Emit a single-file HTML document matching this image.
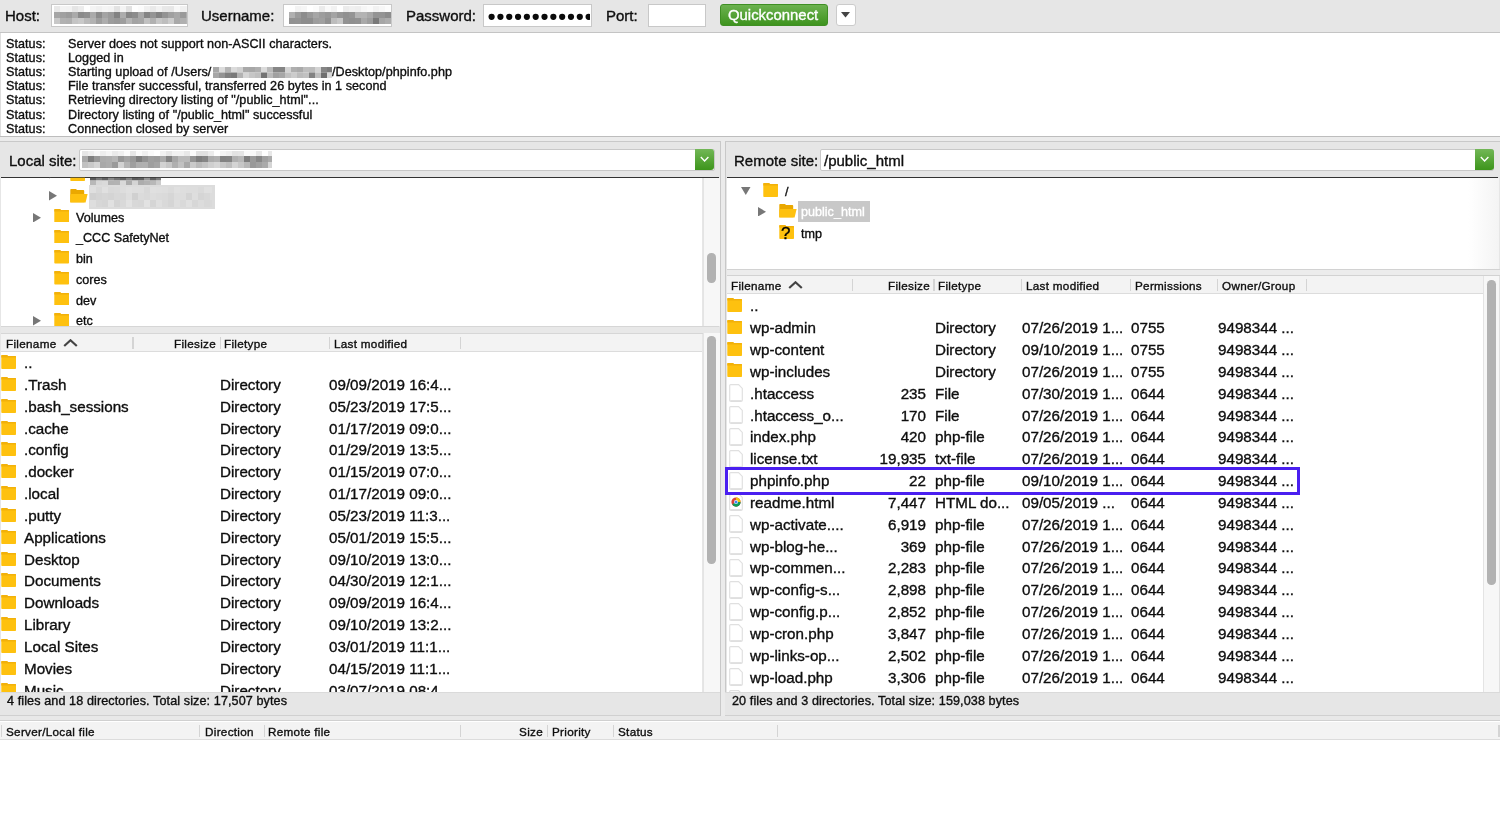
<!DOCTYPE html>
<html><head><meta charset="utf-8">
<style>
*{box-sizing:border-box;margin:0;padding:0}
html,body{width:1500px;height:830px;overflow:hidden;background:#e8e8e8;font-family:"Liberation Sans",sans-serif;color:#0e0e0e}
.a{position:absolute}
.t{position:absolute;white-space:pre;line-height:1;will-change:transform;-webkit-text-stroke:0.35px currentColor}
svg{display:block}
</style></head><body>

<div class="a" style="left:0px;top:0px;width:1500px;height:32px;background:#e6e6e6"></div>
<div class="a" style="left:0px;top:32px;width:1500px;height:1px;background:#c4c4c4"></div>
<div class="t" style="left:5.20px;top:8.00px;font-size:15px;">Host:</div>
<div class="a" style="left:51px;top:3.5px;width:137px;height:23px;background:#fff;border:1px solid #c8c8c8"></div>
<svg class="a" style="left:54px;top:6px;filter:blur(0.6px)" width="133" height="18"><rect x="0" y="0.00" width="6.05" height="6.05" fill="rgb(232,232,232)"/><rect x="6" y="0.00" width="6.05" height="6.05" fill="rgb(243,243,243)"/><rect x="12" y="0.00" width="6.05" height="6.05" fill="rgb(242,242,242)"/><rect x="18" y="0.00" width="6.05" height="6.05" fill="rgb(229,229,229)"/><rect x="24" y="0.00" width="6.05" height="6.05" fill="rgb(236,236,236)"/><rect x="30" y="0.00" width="6.05" height="6.05" fill="rgb(254,254,254)"/><rect x="36" y="0.00" width="6.05" height="6.05" fill="rgb(244,244,244)"/><rect x="42" y="0.00" width="6.05" height="6.05" fill="rgb(240,240,240)"/><rect x="48" y="0.00" width="6.05" height="6.05" fill="rgb(245,245,245)"/><rect x="54" y="0.00" width="6.05" height="6.05" fill="rgb(243,243,243)"/><rect x="60" y="0.00" width="6.05" height="6.05" fill="rgb(227,227,227)"/><rect x="66" y="0.00" width="6.05" height="6.05" fill="rgb(244,244,244)"/><rect x="72" y="0.00" width="6.05" height="6.05" fill="rgb(225,225,225)"/><rect x="78" y="0.00" width="6.05" height="6.05" fill="rgb(254,254,254)"/><rect x="84" y="0.00" width="6.05" height="6.05" fill="rgb(251,251,251)"/><rect x="90" y="0.00" width="6.05" height="6.05" fill="rgb(240,240,240)"/><rect x="96" y="0.00" width="6.05" height="6.05" fill="rgb(233,233,233)"/><rect x="102" y="0.00" width="6.05" height="6.05" fill="rgb(242,242,242)"/><rect x="108" y="0.00" width="6.05" height="6.05" fill="rgb(232,232,232)"/><rect x="114" y="0.00" width="6.05" height="6.05" fill="rgb(231,231,231)"/><rect x="120" y="0.00" width="6.05" height="6.05" fill="rgb(247,247,247)"/><rect x="126" y="0.00" width="6.05" height="6.05" fill="rgb(240,240,240)"/><rect x="132" y="0.00" width="1.05" height="6.05" fill="rgb(242,242,242)"/><rect x="0" y="6.00" width="6.05" height="6.05" fill="rgb(165,165,165)"/><rect x="6" y="6.00" width="6.05" height="6.05" fill="rgb(160,160,160)"/><rect x="12" y="6.00" width="6.05" height="6.05" fill="rgb(155,155,155)"/><rect x="18" y="6.00" width="6.05" height="6.05" fill="rgb(170,170,170)"/><rect x="24" y="6.00" width="6.05" height="6.05" fill="rgb(139,139,139)"/><rect x="30" y="6.00" width="6.05" height="6.05" fill="rgb(144,144,144)"/><rect x="36" y="6.00" width="6.05" height="6.05" fill="rgb(170,170,170)"/><rect x="42" y="6.00" width="6.05" height="6.05" fill="rgb(139,139,139)"/><rect x="48" y="6.00" width="6.05" height="6.05" fill="rgb(163,163,163)"/><rect x="54" y="6.00" width="6.05" height="6.05" fill="rgb(154,154,154)"/><rect x="60" y="6.00" width="6.05" height="6.05" fill="rgb(130,130,130)"/><rect x="66" y="6.00" width="6.05" height="6.05" fill="rgb(172,172,172)"/><rect x="72" y="6.00" width="6.05" height="6.05" fill="rgb(134,134,134)"/><rect x="78" y="6.00" width="6.05" height="6.05" fill="rgb(140,140,140)"/><rect x="84" y="6.00" width="6.05" height="6.05" fill="rgb(167,167,167)"/><rect x="90" y="6.00" width="6.05" height="6.05" fill="rgb(132,132,132)"/><rect x="96" y="6.00" width="6.05" height="6.05" fill="rgb(149,149,149)"/><rect x="102" y="6.00" width="6.05" height="6.05" fill="rgb(131,131,131)"/><rect x="108" y="6.00" width="6.05" height="6.05" fill="rgb(147,147,147)"/><rect x="114" y="6.00" width="6.05" height="6.05" fill="rgb(160,160,160)"/><rect x="120" y="6.00" width="6.05" height="6.05" fill="rgb(168,168,168)"/><rect x="126" y="6.00" width="6.05" height="6.05" fill="rgb(154,154,154)"/><rect x="132" y="6.00" width="1.05" height="6.05" fill="rgb(175,175,175)"/><rect x="0" y="12.00" width="6.05" height="6.05" fill="rgb(200,200,200)"/><rect x="6" y="12.00" width="6.05" height="6.05" fill="rgb(177,177,177)"/><rect x="12" y="12.00" width="6.05" height="6.05" fill="rgb(175,175,175)"/><rect x="18" y="12.00" width="6.05" height="6.05" fill="rgb(196,196,196)"/><rect x="24" y="12.00" width="6.05" height="6.05" fill="rgb(201,201,201)"/><rect x="30" y="12.00" width="6.05" height="6.05" fill="rgb(186,186,186)"/><rect x="36" y="12.00" width="6.05" height="6.05" fill="rgb(178,178,178)"/><rect x="42" y="12.00" width="6.05" height="6.05" fill="rgb(158,158,158)"/><rect x="48" y="12.00" width="6.05" height="6.05" fill="rgb(173,173,173)"/><rect x="54" y="12.00" width="6.05" height="6.05" fill="rgb(156,156,156)"/><rect x="60" y="12.00" width="6.05" height="6.05" fill="rgb(152,152,152)"/><rect x="66" y="12.00" width="6.05" height="6.05" fill="rgb(158,158,158)"/><rect x="72" y="12.00" width="6.05" height="6.05" fill="rgb(181,181,181)"/><rect x="78" y="12.00" width="6.05" height="6.05" fill="rgb(163,163,163)"/><rect x="84" y="12.00" width="6.05" height="6.05" fill="rgb(166,166,166)"/><rect x="90" y="12.00" width="6.05" height="6.05" fill="rgb(193,193,193)"/><rect x="96" y="12.00" width="6.05" height="6.05" fill="rgb(177,177,177)"/><rect x="102" y="12.00" width="6.05" height="6.05" fill="rgb(199,199,199)"/><rect x="108" y="12.00" width="6.05" height="6.05" fill="rgb(190,190,190)"/><rect x="114" y="12.00" width="6.05" height="6.05" fill="rgb(204,204,204)"/><rect x="120" y="12.00" width="6.05" height="6.05" fill="rgb(169,169,169)"/><rect x="126" y="12.00" width="6.05" height="6.05" fill="rgb(176,176,176)"/><rect x="132" y="12.00" width="1.05" height="6.05" fill="rgb(182,182,182)"/></svg>
<div class="t" style="left:201.40px;top:8.00px;font-size:15px;">Username:</div>
<div class="a" style="left:283px;top:3.5px;width:109px;height:23px;background:#fff;border:1px solid #c8c8c8"></div>
<svg class="a" style="left:289px;top:6px;filter:blur(0.6px)" width="102" height="18"><rect x="0" y="0.00" width="6.05" height="6.05" fill="rgb(254,254,254)"/><rect x="6" y="0.00" width="6.05" height="6.05" fill="rgb(243,243,243)"/><rect x="12" y="0.00" width="6.05" height="6.05" fill="rgb(246,246,246)"/><rect x="18" y="0.00" width="6.05" height="6.05" fill="rgb(255,255,255)"/><rect x="24" y="0.00" width="6.05" height="6.05" fill="rgb(251,251,251)"/><rect x="30" y="0.00" width="6.05" height="6.05" fill="rgb(235,235,235)"/><rect x="36" y="0.00" width="6.05" height="6.05" fill="rgb(249,249,249)"/><rect x="42" y="0.00" width="6.05" height="6.05" fill="rgb(242,242,242)"/><rect x="48" y="0.00" width="6.05" height="6.05" fill="rgb(255,255,255)"/><rect x="54" y="0.00" width="6.05" height="6.05" fill="rgb(236,236,236)"/><rect x="60" y="0.00" width="6.05" height="6.05" fill="rgb(240,240,240)"/><rect x="66" y="0.00" width="6.05" height="6.05" fill="rgb(238,238,238)"/><rect x="72" y="0.00" width="6.05" height="6.05" fill="rgb(246,246,246)"/><rect x="78" y="0.00" width="6.05" height="6.05" fill="rgb(250,250,250)"/><rect x="84" y="0.00" width="6.05" height="6.05" fill="rgb(242,242,242)"/><rect x="90" y="0.00" width="6.05" height="6.05" fill="rgb(247,247,247)"/><rect x="96" y="0.00" width="6.05" height="6.05" fill="rgb(252,252,252)"/><rect x="0" y="6.00" width="6.05" height="6.05" fill="rgb(176,176,176)"/><rect x="6" y="6.00" width="6.05" height="6.05" fill="rgb(155,155,155)"/><rect x="12" y="6.00" width="6.05" height="6.05" fill="rgb(140,140,140)"/><rect x="18" y="6.00" width="6.05" height="6.05" fill="rgb(153,153,153)"/><rect x="24" y="6.00" width="6.05" height="6.05" fill="rgb(166,166,166)"/><rect x="30" y="6.00" width="6.05" height="6.05" fill="rgb(157,157,157)"/><rect x="36" y="6.00" width="6.05" height="6.05" fill="rgb(151,151,151)"/><rect x="42" y="6.00" width="6.05" height="6.05" fill="rgb(164,164,164)"/><rect x="48" y="6.00" width="6.05" height="6.05" fill="rgb(150,150,150)"/><rect x="54" y="6.00" width="6.05" height="6.05" fill="rgb(144,144,144)"/><rect x="60" y="6.00" width="6.05" height="6.05" fill="rgb(148,148,148)"/><rect x="66" y="6.00" width="6.05" height="6.05" fill="rgb(179,179,179)"/><rect x="72" y="6.00" width="6.05" height="6.05" fill="rgb(179,179,179)"/><rect x="78" y="6.00" width="6.05" height="6.05" fill="rgb(168,168,168)"/><rect x="84" y="6.00" width="6.05" height="6.05" fill="rgb(148,148,148)"/><rect x="90" y="6.00" width="6.05" height="6.05" fill="rgb(148,148,148)"/><rect x="96" y="6.00" width="6.05" height="6.05" fill="rgb(140,140,140)"/><rect x="0" y="12.00" width="6.05" height="6.05" fill="rgb(146,146,146)"/><rect x="6" y="12.00" width="6.05" height="6.05" fill="rgb(147,147,147)"/><rect x="12" y="12.00" width="6.05" height="6.05" fill="rgb(141,141,141)"/><rect x="18" y="12.00" width="6.05" height="6.05" fill="rgb(141,141,141)"/><rect x="24" y="12.00" width="6.05" height="6.05" fill="rgb(157,157,157)"/><rect x="30" y="12.00" width="6.05" height="6.05" fill="rgb(160,160,160)"/><rect x="36" y="12.00" width="6.05" height="6.05" fill="rgb(145,145,145)"/><rect x="42" y="12.00" width="6.05" height="6.05" fill="rgb(189,189,189)"/><rect x="48" y="12.00" width="6.05" height="6.05" fill="rgb(200,200,200)"/><rect x="54" y="12.00" width="6.05" height="6.05" fill="rgb(146,146,146)"/><rect x="60" y="12.00" width="6.05" height="6.05" fill="rgb(143,143,143)"/><rect x="66" y="12.00" width="6.05" height="6.05" fill="rgb(145,145,145)"/><rect x="72" y="12.00" width="6.05" height="6.05" fill="rgb(169,169,169)"/><rect x="78" y="12.00" width="6.05" height="6.05" fill="rgb(158,158,158)"/><rect x="84" y="12.00" width="6.05" height="6.05" fill="rgb(122,122,122)"/><rect x="90" y="12.00" width="6.05" height="6.05" fill="rgb(166,166,166)"/><rect x="96" y="12.00" width="6.05" height="6.05" fill="rgb(173,173,173)"/></svg>
<div class="t" style="left:406.00px;top:8.00px;font-size:15px;">Password:</div>
<div class="a" style="left:483px;top:3.5px;width:109px;height:23px;background:#fff;border:1px solid #c8c8c8"></div>
<svg class="a" style="left:484px;top:4px" width="106" height="21"><circle cx="7.60" cy="12.8" r="3.1" fill="#0a0a0a"/><circle cx="16.42" cy="12.8" r="3.1" fill="#0a0a0a"/><circle cx="25.24" cy="12.8" r="3.1" fill="#0a0a0a"/><circle cx="34.06" cy="12.8" r="3.1" fill="#0a0a0a"/><circle cx="42.88" cy="12.8" r="3.1" fill="#0a0a0a"/><circle cx="51.70" cy="12.8" r="3.1" fill="#0a0a0a"/><circle cx="60.52" cy="12.8" r="3.1" fill="#0a0a0a"/><circle cx="69.34" cy="12.8" r="3.1" fill="#0a0a0a"/><circle cx="78.16" cy="12.8" r="3.1" fill="#0a0a0a"/><circle cx="86.98" cy="12.8" r="3.1" fill="#0a0a0a"/><circle cx="95.80" cy="12.8" r="3.1" fill="#0a0a0a"/><circle cx="104.62" cy="12.8" r="3.1" fill="#0a0a0a"/></svg>
<div class="t" style="left:606.40px;top:8.00px;font-size:15px;">Port:</div>
<div class="a" style="left:648px;top:3.5px;width:58px;height:23px;background:#fff;border:1px solid #c8c8c8"></div>
<div class="a" style="left:719.5px;top:4px;width:108px;height:22px;background:linear-gradient(#6cb24f,#3e941e);border-radius:3px;border:1px solid #3f8f24"></div>
<div class="t" style="left:727.60px;top:8.00px;font-size:14.9px;color:#fff;">Quickconnect</div>
<div class="a" style="left:835.5px;top:3.8px;width:20px;height:22px;background:#fff;border:1px solid #cbcbcb;border-radius:3px"></div>
<svg class="a" style="left:841px;top:12px" width="9" height="6"><path d="M0 0 L9 0 L4.5 5.5 Z" fill="#444"/></svg>
<div class="a" style="left:0px;top:33px;width:1500px;height:103px;background:#fff;border-left:1px solid #dedede"></div>
<div class="a" style="left:0px;top:136px;width:1500px;height:1px;background:#bdbdbd"></div>
<div class="t" style="left:6.30px;top:38.00px;font-size:12.6px;letter-spacing:0.05px;">Status:</div>
<div class="t" style="left:68.30px;top:38.00px;font-size:12.6px;letter-spacing:0.05px;">Server does not support non-ASCII characters.</div>
<div class="t" style="left:6.30px;top:52.00px;font-size:12.6px;letter-spacing:0.05px;">Status:</div>
<div class="t" style="left:68.30px;top:52.00px;font-size:12.6px;letter-spacing:0.05px;">Logged in</div>
<div class="t" style="left:6.30px;top:66.00px;font-size:12.6px;letter-spacing:0.05px;">Status:</div>
<div class="t" style="left:68.30px;top:66.00px;font-size:12.6px;letter-spacing:0.05px;">Starting upload of /Users/</div>
<svg class="a" style="left:213px;top:66.5px;filter:blur(0.6px)" width="119" height="11"><rect x="0" y="0.00" width="6.05" height="5.55" fill="rgb(167,167,167)"/><rect x="6" y="0.00" width="6.05" height="5.55" fill="rgb(220,220,220)"/><rect x="12" y="0.00" width="6.05" height="5.55" fill="rgb(181,181,181)"/><rect x="18" y="0.00" width="6.05" height="5.55" fill="rgb(219,219,219)"/><rect x="24" y="0.00" width="6.05" height="5.55" fill="rgb(209,209,209)"/><rect x="30" y="0.00" width="6.05" height="5.55" fill="rgb(169,169,169)"/><rect x="36" y="0.00" width="6.05" height="5.55" fill="rgb(167,167,167)"/><rect x="42" y="0.00" width="6.05" height="5.55" fill="rgb(175,175,175)"/><rect x="48" y="0.00" width="6.05" height="5.55" fill="rgb(219,219,219)"/><rect x="54" y="0.00" width="6.05" height="5.55" fill="rgb(185,185,185)"/><rect x="60" y="0.00" width="6.05" height="5.55" fill="rgb(134,134,134)"/><rect x="66" y="0.00" width="6.05" height="5.55" fill="rgb(133,133,133)"/><rect x="72" y="0.00" width="6.05" height="5.55" fill="rgb(212,212,212)"/><rect x="78" y="0.00" width="6.05" height="5.55" fill="rgb(175,175,175)"/><rect x="84" y="0.00" width="6.05" height="5.55" fill="rgb(170,170,170)"/><rect x="90" y="0.00" width="6.05" height="5.55" fill="rgb(190,190,190)"/><rect x="96" y="0.00" width="6.05" height="5.55" fill="rgb(188,188,188)"/><rect x="102" y="0.00" width="6.05" height="5.55" fill="rgb(211,211,211)"/><rect x="108" y="0.00" width="6.05" height="5.55" fill="rgb(133,133,133)"/><rect x="114" y="0.00" width="5.05" height="5.55" fill="rgb(122,122,122)"/><rect x="0" y="5.50" width="6.05" height="5.55" fill="rgb(167,167,167)"/><rect x="6" y="5.50" width="6.05" height="5.55" fill="rgb(148,148,148)"/><rect x="12" y="5.50" width="6.05" height="5.55" fill="rgb(128,128,128)"/><rect x="18" y="5.50" width="6.05" height="5.55" fill="rgb(121,121,121)"/><rect x="24" y="5.50" width="6.05" height="5.55" fill="rgb(178,178,178)"/><rect x="30" y="5.50" width="6.05" height="5.55" fill="rgb(213,213,213)"/><rect x="36" y="5.50" width="6.05" height="5.55" fill="rgb(198,198,198)"/><rect x="42" y="5.50" width="6.05" height="5.55" fill="rgb(191,191,191)"/><rect x="48" y="5.50" width="6.05" height="5.55" fill="rgb(115,115,115)"/><rect x="54" y="5.50" width="6.05" height="5.55" fill="rgb(186,186,186)"/><rect x="60" y="5.50" width="6.05" height="5.55" fill="rgb(160,160,160)"/><rect x="66" y="5.50" width="6.05" height="5.55" fill="rgb(167,167,167)"/><rect x="72" y="5.50" width="6.05" height="5.55" fill="rgb(193,193,193)"/><rect x="78" y="5.50" width="6.05" height="5.55" fill="rgb(204,204,204)"/><rect x="84" y="5.50" width="6.05" height="5.55" fill="rgb(188,188,188)"/><rect x="90" y="5.50" width="6.05" height="5.55" fill="rgb(193,193,193)"/><rect x="96" y="5.50" width="6.05" height="5.55" fill="rgb(130,130,130)"/><rect x="102" y="5.50" width="6.05" height="5.55" fill="rgb(189,189,189)"/><rect x="108" y="5.50" width="6.05" height="5.55" fill="rgb(111,111,111)"/><rect x="114" y="5.50" width="5.05" height="5.55" fill="rgb(216,216,216)"/></svg>
<div class="t" style="left:331.70px;top:66.00px;font-size:12.6px;letter-spacing:0.05px;">/Desktop/phpinfo.php</div>
<div class="t" style="left:6.30px;top:80.00px;font-size:12.6px;letter-spacing:0.05px;">Status:</div>
<div class="t" style="left:68.30px;top:80.00px;font-size:12.6px;letter-spacing:0.05px;">File transfer successful, transferred 26 bytes in 1 second</div>
<div class="t" style="left:6.30px;top:94.00px;font-size:12.6px;letter-spacing:0.05px;">Status:</div>
<div class="t" style="left:68.30px;top:94.00px;font-size:12.6px;letter-spacing:0.05px;">Retrieving directory listing of "/public_html"...</div>
<div class="t" style="left:6.30px;top:109.00px;font-size:12.6px;letter-spacing:0.05px;">Status:</div>
<div class="t" style="left:68.30px;top:109.00px;font-size:12.6px;letter-spacing:0.05px;">Directory listing of "/public_html" successful</div>
<div class="t" style="left:6.30px;top:123.00px;font-size:12.6px;letter-spacing:0.05px;">Status:</div>
<div class="t" style="left:68.30px;top:123.00px;font-size:12.6px;letter-spacing:0.05px;">Connection closed by server</div>
<div class="a" style="left:0px;top:137px;width:1500px;height:580px;background:#e6e6e6"></div>
<div class="a" style="left:0px;top:137px;width:1500px;height:4px;background:#ebebeb"></div>
<div class="a" style="left:0px;top:141px;width:1500px;height:1px;background:#c9c9c9"></div>
<div class="a" style="left:0px;top:142px;width:721px;height:574px;background:#e6e6e6;border-right:1px solid #c8c8c8"></div>
<div class="a" style="left:721px;top:137px;width:4px;height:580px;background:#ebebeb"></div>
<div class="a" style="left:725px;top:142px;width:775px;height:574px;background:#e6e6e6;border-left:1px solid #c8c8c8"></div>
<div class="t" style="left:9.00px;top:153.00px;font-size:15px;">Local site:</div>
<div class="a" style="left:79px;top:148.5px;width:636px;height:22px;background:#fff;border:1px solid #c8c8c8;border-radius:2px"></div>
<svg class="a" style="left:82px;top:151px;filter:blur(0.6px)" width="190" height="17"><rect x="0" y="0.00" width="6.05" height="5.05" fill="rgb(230,230,230)"/><rect x="6" y="0.00" width="6.05" height="5.05" fill="rgb(238,238,238)"/><rect x="12" y="0.00" width="6.05" height="5.05" fill="rgb(247,247,247)"/><rect x="18" y="0.00" width="6.05" height="5.05" fill="rgb(238,238,238)"/><rect x="24" y="0.00" width="6.05" height="5.05" fill="rgb(245,245,245)"/><rect x="30" y="0.00" width="6.05" height="5.05" fill="rgb(234,234,234)"/><rect x="36" y="0.00" width="6.05" height="5.05" fill="rgb(240,240,240)"/><rect x="42" y="0.00" width="6.05" height="5.05" fill="rgb(251,251,251)"/><rect x="48" y="0.00" width="6.05" height="5.05" fill="rgb(231,231,231)"/><rect x="54" y="0.00" width="6.05" height="5.05" fill="rgb(250,250,250)"/><rect x="60" y="0.00" width="6.05" height="5.05" fill="rgb(240,240,240)"/><rect x="66" y="0.00" width="6.05" height="5.05" fill="rgb(250,250,250)"/><rect x="72" y="0.00" width="6.05" height="5.05" fill="rgb(255,255,255)"/><rect x="78" y="0.00" width="6.05" height="5.05" fill="rgb(241,241,241)"/><rect x="84" y="0.00" width="6.05" height="5.05" fill="rgb(230,230,230)"/><rect x="90" y="0.00" width="6.05" height="5.05" fill="rgb(241,241,241)"/><rect x="96" y="0.00" width="6.05" height="5.05" fill="rgb(241,241,241)"/><rect x="102" y="0.00" width="6.05" height="5.05" fill="rgb(232,232,232)"/><rect x="108" y="0.00" width="6.05" height="5.05" fill="rgb(250,250,250)"/><rect x="114" y="0.00" width="6.05" height="5.05" fill="rgb(225,225,225)"/><rect x="120" y="0.00" width="6.05" height="5.05" fill="rgb(225,225,225)"/><rect x="126" y="0.00" width="6.05" height="5.05" fill="rgb(236,236,236)"/><rect x="132" y="0.00" width="6.05" height="5.05" fill="rgb(254,254,254)"/><rect x="138" y="0.00" width="6.05" height="5.05" fill="rgb(243,243,243)"/><rect x="144" y="0.00" width="6.05" height="5.05" fill="rgb(238,238,238)"/><rect x="150" y="0.00" width="6.05" height="5.05" fill="rgb(227,227,227)"/><rect x="156" y="0.00" width="6.05" height="5.05" fill="rgb(229,229,229)"/><rect x="162" y="0.00" width="6.05" height="5.05" fill="rgb(250,250,250)"/><rect x="168" y="0.00" width="6.05" height="5.05" fill="rgb(249,249,249)"/><rect x="174" y="0.00" width="6.05" height="5.05" fill="rgb(232,232,232)"/><rect x="180" y="0.00" width="6.05" height="5.05" fill="rgb(254,254,254)"/><rect x="186" y="0.00" width="4.05" height="5.05" fill="rgb(232,232,232)"/><rect x="0" y="5.00" width="6.05" height="6.05" fill="rgb(169,169,169)"/><rect x="6" y="5.00" width="6.05" height="6.05" fill="rgb(127,127,127)"/><rect x="12" y="5.00" width="6.05" height="6.05" fill="rgb(152,152,152)"/><rect x="18" y="5.00" width="6.05" height="6.05" fill="rgb(172,172,172)"/><rect x="24" y="5.00" width="6.05" height="6.05" fill="rgb(174,174,174)"/><rect x="30" y="5.00" width="6.05" height="6.05" fill="rgb(181,181,181)"/><rect x="36" y="5.00" width="6.05" height="6.05" fill="rgb(151,151,151)"/><rect x="42" y="5.00" width="6.05" height="6.05" fill="rgb(164,164,164)"/><rect x="48" y="5.00" width="6.05" height="6.05" fill="rgb(153,153,153)"/><rect x="54" y="5.00" width="6.05" height="6.05" fill="rgb(127,127,127)"/><rect x="60" y="5.00" width="6.05" height="6.05" fill="rgb(146,146,146)"/><rect x="66" y="5.00" width="6.05" height="6.05" fill="rgb(159,159,159)"/><rect x="72" y="5.00" width="6.05" height="6.05" fill="rgb(156,156,156)"/><rect x="78" y="5.00" width="6.05" height="6.05" fill="rgb(169,169,169)"/><rect x="84" y="5.00" width="6.05" height="6.05" fill="rgb(132,132,132)"/><rect x="90" y="5.00" width="6.05" height="6.05" fill="rgb(166,166,166)"/><rect x="96" y="5.00" width="6.05" height="6.05" fill="rgb(185,185,185)"/><rect x="102" y="5.00" width="6.05" height="6.05" fill="rgb(185,185,185)"/><rect x="108" y="5.00" width="6.05" height="6.05" fill="rgb(148,148,148)"/><rect x="114" y="5.00" width="6.05" height="6.05" fill="rgb(126,126,126)"/><rect x="120" y="5.00" width="6.05" height="6.05" fill="rgb(134,134,134)"/><rect x="126" y="5.00" width="6.05" height="6.05" fill="rgb(172,172,172)"/><rect x="132" y="5.00" width="6.05" height="6.05" fill="rgb(177,177,177)"/><rect x="138" y="5.00" width="6.05" height="6.05" fill="rgb(130,130,130)"/><rect x="144" y="5.00" width="6.05" height="6.05" fill="rgb(132,132,132)"/><rect x="150" y="5.00" width="6.05" height="6.05" fill="rgb(176,176,176)"/><rect x="156" y="5.00" width="6.05" height="6.05" fill="rgb(184,184,184)"/><rect x="162" y="5.00" width="6.05" height="6.05" fill="rgb(126,126,126)"/><rect x="168" y="5.00" width="6.05" height="6.05" fill="rgb(154,154,154)"/><rect x="174" y="5.00" width="6.05" height="6.05" fill="rgb(135,135,135)"/><rect x="180" y="5.00" width="6.05" height="6.05" fill="rgb(160,160,160)"/><rect x="186" y="5.00" width="4.05" height="6.05" fill="rgb(171,171,171)"/><rect x="0" y="11.00" width="6.05" height="6.05" fill="rgb(193,193,193)"/><rect x="6" y="11.00" width="6.05" height="6.05" fill="rgb(201,201,201)"/><rect x="12" y="11.00" width="6.05" height="6.05" fill="rgb(212,212,212)"/><rect x="18" y="11.00" width="6.05" height="6.05" fill="rgb(169,169,169)"/><rect x="24" y="11.00" width="6.05" height="6.05" fill="rgb(173,173,173)"/><rect x="30" y="11.00" width="6.05" height="6.05" fill="rgb(154,154,154)"/><rect x="36" y="11.00" width="6.05" height="6.05" fill="rgb(210,210,210)"/><rect x="42" y="11.00" width="6.05" height="6.05" fill="rgb(180,180,180)"/><rect x="48" y="11.00" width="6.05" height="6.05" fill="rgb(159,159,159)"/><rect x="54" y="11.00" width="6.05" height="6.05" fill="rgb(175,175,175)"/><rect x="60" y="11.00" width="6.05" height="6.05" fill="rgb(176,176,176)"/><rect x="66" y="11.00" width="6.05" height="6.05" fill="rgb(159,159,159)"/><rect x="72" y="11.00" width="6.05" height="6.05" fill="rgb(165,165,165)"/><rect x="78" y="11.00" width="6.05" height="6.05" fill="rgb(210,210,210)"/><rect x="84" y="11.00" width="6.05" height="6.05" fill="rgb(199,199,199)"/><rect x="90" y="11.00" width="6.05" height="6.05" fill="rgb(175,175,175)"/><rect x="96" y="11.00" width="6.05" height="6.05" fill="rgb(193,193,193)"/><rect x="102" y="11.00" width="6.05" height="6.05" fill="rgb(168,168,168)"/><rect x="108" y="11.00" width="6.05" height="6.05" fill="rgb(202,202,202)"/><rect x="114" y="11.00" width="6.05" height="6.05" fill="rgb(187,187,187)"/><rect x="120" y="11.00" width="6.05" height="6.05" fill="rgb(196,196,196)"/><rect x="126" y="11.00" width="6.05" height="6.05" fill="rgb(207,207,207)"/><rect x="132" y="11.00" width="6.05" height="6.05" fill="rgb(214,214,214)"/><rect x="138" y="11.00" width="6.05" height="6.05" fill="rgb(199,199,199)"/><rect x="144" y="11.00" width="6.05" height="6.05" fill="rgb(190,190,190)"/><rect x="150" y="11.00" width="6.05" height="6.05" fill="rgb(212,212,212)"/><rect x="156" y="11.00" width="6.05" height="6.05" fill="rgb(199,199,199)"/><rect x="162" y="11.00" width="6.05" height="6.05" fill="rgb(184,184,184)"/><rect x="168" y="11.00" width="6.05" height="6.05" fill="rgb(153,153,153)"/><rect x="174" y="11.00" width="6.05" height="6.05" fill="rgb(161,161,161)"/><rect x="180" y="11.00" width="6.05" height="6.05" fill="rgb(170,170,170)"/><rect x="186" y="11.00" width="4.05" height="6.05" fill="rgb(213,213,213)"/></svg>
<div class="a" style="left:695px;top:148.5px;width:19px;height:21.7px;background:linear-gradient(#72b757,#3d951b);border-radius:0 3px 3px 0"></div>
<svg class="a" style="left:700px;top:156px" width="10" height="7"><path d="M0.8 1 L4.6 5 L8.4 1" fill="none" stroke="#fff" stroke-width="1.4"/></svg>
<div class="t" style="left:734.00px;top:153.00px;font-size:15px;">Remote site:</div>
<div class="a" style="left:820px;top:148.5px;width:674px;height:22px;background:#fff;border:1px solid #c8c8c8;border-radius:2px"></div>
<div class="t" style="left:823.50px;top:153.00px;font-size:15px;">/public_html</div>
<div class="a" style="left:1475px;top:148.5px;width:19px;height:21.7px;background:linear-gradient(#72b757,#3d951b);border-radius:0 3px 3px 0"></div>
<svg class="a" style="left:1480px;top:156px" width="10" height="7"><path d="M0.8 1 L4.6 5 L8.4 1" fill="none" stroke="#fff" stroke-width="1.4"/></svg>
<div class="a" style="left:1px;top:176.6px;width:717.5px;height:1.4px;background:#333"></div>
<div class="a" style="left:727px;top:176.6px;width:771px;height:1.4px;background:#333"></div>
<div class="a" style="left:1px;top:178px;width:701px;height:148px;background:#fff"></div>
<div class="a" style="left:702.5px;top:178px;width:17px;height:148px;background:#f7f7f7;border-left:1px solid #e4e4e4"></div>
<div class="a" style="left:707px;top:253px;width:8.5px;height:30px;background:#b2b2b2;border-radius:4.2px"></div>
<div class="a" style="left:0;top:0;width:1500px;height:830px;clip-path:inset(177.8px 0 0 0)">
<svg class="a" style="left:49px;top:169px" width="8" height="9.5" viewBox="0 0 8 9.5"><path d="M0 0 L8 4.75 L0 9.5 Z" fill="#777"/></svg>
<svg class="a" style="left:70px;top:167px" width="15" height="14" viewBox="0 0 15 14" preserveAspectRatio="none"><path d="M0.3 0.8 Q0.3 0 1.1 0 L5.9 0 L7.1 1.1 L14.2 1.1 Q15 1.1 15 1.9 L15 13.2 Q15 14 14.2 14 L1.1 14 Q0.3 14 0.3 13.2 Z" fill="#fec10f"/><path d="M0.3 0.8 Q0.3 0 1.1 0 L5.9 0 L7.1 1.1 L14.2 1.1 Q15 1.1 15 1.9 L15 2.6 L0.3 2.6 Z" fill="#f2b10a"/></svg>
<svg class="a" style="left:90px;top:175.5px;filter:blur(0.6px)" width="71" height="9"><rect x="0" y="0.00" width="6.05" height="4.55" fill="rgb(90,90,90)"/><rect x="6" y="0.00" width="6.05" height="4.55" fill="rgb(120,120,120)"/><rect x="12" y="0.00" width="6.05" height="4.55" fill="rgb(97,97,97)"/><rect x="18" y="0.00" width="6.05" height="4.55" fill="rgb(138,138,138)"/><rect x="24" y="0.00" width="6.05" height="4.55" fill="rgb(115,115,115)"/><rect x="30" y="0.00" width="6.05" height="4.55" fill="rgb(99,99,99)"/><rect x="36" y="0.00" width="6.05" height="4.55" fill="rgb(133,133,133)"/><rect x="42" y="0.00" width="6.05" height="4.55" fill="rgb(92,92,92)"/><rect x="48" y="0.00" width="6.05" height="4.55" fill="rgb(98,98,98)"/><rect x="54" y="0.00" width="6.05" height="4.55" fill="rgb(150,150,150)"/><rect x="60" y="0.00" width="6.05" height="4.55" fill="rgb(97,97,97)"/><rect x="66" y="0.00" width="5.05" height="4.55" fill="rgb(124,124,124)"/><rect x="0" y="4.50" width="6.05" height="4.55" fill="rgb(184,184,184)"/><rect x="6" y="4.50" width="6.05" height="4.55" fill="rgb(215,215,215)"/><rect x="12" y="4.50" width="6.05" height="4.55" fill="rgb(218,218,218)"/><rect x="18" y="4.50" width="6.05" height="4.55" fill="rgb(178,178,178)"/><rect x="24" y="4.50" width="6.05" height="4.55" fill="rgb(179,179,179)"/><rect x="30" y="4.50" width="6.05" height="4.55" fill="rgb(217,217,217)"/><rect x="36" y="4.50" width="6.05" height="4.55" fill="rgb(172,172,172)"/><rect x="42" y="4.50" width="6.05" height="4.55" fill="rgb(212,212,212)"/><rect x="48" y="4.50" width="6.05" height="4.55" fill="rgb(173,173,173)"/><rect x="54" y="4.50" width="6.05" height="4.55" fill="rgb(178,178,178)"/><rect x="60" y="4.50" width="6.05" height="4.55" fill="rgb(184,184,184)"/><rect x="66" y="4.50" width="5.05" height="4.55" fill="rgb(204,204,204)"/></svg>
</div>
<div class="a" style="left:88.6px;top:185.3px;width:126px;height:23.8px;background:#dcdcdc"></div>
<svg class="a" style="left:90px;top:187px;filter:blur(0.6px)" width="122" height="20"><rect x="0" y="0.00" width="6.05" height="6.05" fill="rgb(223,223,223)"/><rect x="6" y="0.00" width="6.05" height="6.05" fill="rgb(216,216,216)"/><rect x="12" y="0.00" width="6.05" height="6.05" fill="rgb(224,224,224)"/><rect x="18" y="0.00" width="6.05" height="6.05" fill="rgb(217,217,217)"/><rect x="24" y="0.00" width="6.05" height="6.05" fill="rgb(218,218,218)"/><rect x="30" y="0.00" width="6.05" height="6.05" fill="rgb(221,221,221)"/><rect x="36" y="0.00" width="6.05" height="6.05" fill="rgb(224,224,224)"/><rect x="42" y="0.00" width="6.05" height="6.05" fill="rgb(222,222,222)"/><rect x="48" y="0.00" width="6.05" height="6.05" fill="rgb(222,222,222)"/><rect x="54" y="0.00" width="6.05" height="6.05" fill="rgb(216,216,216)"/><rect x="60" y="0.00" width="6.05" height="6.05" fill="rgb(224,224,224)"/><rect x="66" y="0.00" width="6.05" height="6.05" fill="rgb(223,223,223)"/><rect x="72" y="0.00" width="6.05" height="6.05" fill="rgb(222,222,222)"/><rect x="78" y="0.00" width="6.05" height="6.05" fill="rgb(219,219,219)"/><rect x="84" y="0.00" width="6.05" height="6.05" fill="rgb(224,224,224)"/><rect x="90" y="0.00" width="6.05" height="6.05" fill="rgb(222,222,222)"/><rect x="96" y="0.00" width="6.05" height="6.05" fill="rgb(221,221,221)"/><rect x="102" y="0.00" width="6.05" height="6.05" fill="rgb(221,221,221)"/><rect x="108" y="0.00" width="6.05" height="6.05" fill="rgb(218,218,218)"/><rect x="114" y="0.00" width="6.05" height="6.05" fill="rgb(224,224,224)"/><rect x="120" y="0.00" width="2.05" height="6.05" fill="rgb(224,224,224)"/><rect x="0" y="6.00" width="6.05" height="7.05" fill="rgb(209,209,209)"/><rect x="6" y="6.00" width="6.05" height="7.05" fill="rgb(212,212,212)"/><rect x="12" y="6.00" width="6.05" height="7.05" fill="rgb(214,214,214)"/><rect x="18" y="6.00" width="6.05" height="7.05" fill="rgb(212,212,212)"/><rect x="24" y="6.00" width="6.05" height="7.05" fill="rgb(216,216,216)"/><rect x="30" y="6.00" width="6.05" height="7.05" fill="rgb(215,215,215)"/><rect x="36" y="6.00" width="6.05" height="7.05" fill="rgb(222,222,222)"/><rect x="42" y="6.00" width="6.05" height="7.05" fill="rgb(208,208,208)"/><rect x="48" y="6.00" width="6.05" height="7.05" fill="rgb(219,219,219)"/><rect x="54" y="6.00" width="6.05" height="7.05" fill="rgb(217,217,217)"/><rect x="60" y="6.00" width="6.05" height="7.05" fill="rgb(221,221,221)"/><rect x="66" y="6.00" width="6.05" height="7.05" fill="rgb(219,219,219)"/><rect x="72" y="6.00" width="6.05" height="7.05" fill="rgb(218,218,218)"/><rect x="78" y="6.00" width="6.05" height="7.05" fill="rgb(214,214,214)"/><rect x="84" y="6.00" width="6.05" height="7.05" fill="rgb(221,221,221)"/><rect x="90" y="6.00" width="6.05" height="7.05" fill="rgb(221,221,221)"/><rect x="96" y="6.00" width="6.05" height="7.05" fill="rgb(212,212,212)"/><rect x="102" y="6.00" width="6.05" height="7.05" fill="rgb(222,222,222)"/><rect x="108" y="6.00" width="6.05" height="7.05" fill="rgb(213,213,213)"/><rect x="114" y="6.00" width="6.05" height="7.05" fill="rgb(216,216,216)"/><rect x="120" y="6.00" width="2.05" height="7.05" fill="rgb(220,220,220)"/><rect x="0" y="13.00" width="6.05" height="7.05" fill="rgb(222,222,222)"/><rect x="6" y="13.00" width="6.05" height="7.05" fill="rgb(215,215,215)"/><rect x="12" y="13.00" width="6.05" height="7.05" fill="rgb(213,213,213)"/><rect x="18" y="13.00" width="6.05" height="7.05" fill="rgb(225,225,225)"/><rect x="24" y="13.00" width="6.05" height="7.05" fill="rgb(212,212,212)"/><rect x="30" y="13.00" width="6.05" height="7.05" fill="rgb(217,217,217)"/><rect x="36" y="13.00" width="6.05" height="7.05" fill="rgb(226,226,226)"/><rect x="42" y="13.00" width="6.05" height="7.05" fill="rgb(216,216,216)"/><rect x="48" y="13.00" width="6.05" height="7.05" fill="rgb(215,215,215)"/><rect x="54" y="13.00" width="6.05" height="7.05" fill="rgb(226,226,226)"/><rect x="60" y="13.00" width="6.05" height="7.05" fill="rgb(213,213,213)"/><rect x="66" y="13.00" width="6.05" height="7.05" fill="rgb(223,223,223)"/><rect x="72" y="13.00" width="6.05" height="7.05" fill="rgb(217,217,217)"/><rect x="78" y="13.00" width="6.05" height="7.05" fill="rgb(213,213,213)"/><rect x="84" y="13.00" width="6.05" height="7.05" fill="rgb(222,222,222)"/><rect x="90" y="13.00" width="6.05" height="7.05" fill="rgb(217,217,217)"/><rect x="96" y="13.00" width="6.05" height="7.05" fill="rgb(224,224,224)"/><rect x="102" y="13.00" width="6.05" height="7.05" fill="rgb(215,215,215)"/><rect x="108" y="13.00" width="6.05" height="7.05" fill="rgb(220,220,220)"/><rect x="114" y="13.00" width="6.05" height="7.05" fill="rgb(216,216,216)"/><rect x="120" y="13.00" width="2.05" height="7.05" fill="rgb(217,217,217)"/></svg>
<svg class="a" style="left:49px;top:191.2px" width="8" height="9.5" viewBox="0 0 8 9.5"><path d="M0 0 L8 4.75 L0 9.5 Z" fill="#777"/></svg>
<svg class="a" style="left:70px;top:189px" width="18" height="14" viewBox="0 0 18 14"><path d="M0.3 0.8 Q0.3 0 1.1 0 L5.9 0 L7.1 1.1 L13.4 1.1 Q14.2 1.1 14.2 1.9 L14.2 13.3 L0.3 13.3 Z" fill="#eaa800"/><path d="M1.6 5 L17.6 5 L15.6 13.4 L0.3 13.4 L0.3 6.3 Q0.3 5 1.6 5 Z" fill="#fec10f"/></svg>
<svg class="a" style="left:32.6px;top:212.55px" width="8" height="9.5" viewBox="0 0 8 9.5"><path d="M0 0 L8 4.75 L0 9.5 Z" fill="#777"/></svg>
<svg class="a" style="left:53.6px;top:208.9px" width="15" height="13.6" viewBox="0 0 15 14" preserveAspectRatio="none"><path d="M0.3 0.8 Q0.3 0 1.1 0 L5.9 0 L7.1 1.1 L14.2 1.1 Q15 1.1 15 1.9 L15 13.2 Q15 14 14.2 14 L1.1 14 Q0.3 14 0.3 13.2 Z" fill="#fec10f"/><path d="M0.3 0.8 Q0.3 0 1.1 0 L5.9 0 L7.1 1.1 L14.2 1.1 Q15 1.1 15 1.9 L15 2.6 L0.3 2.6 Z" fill="#f2b10a"/></svg>
<div class="t" style="left:75.60px;top:212.00px;font-size:12.6px;">Volumes</div>
<svg class="a" style="left:53.6px;top:229.65px" width="15" height="13.6" viewBox="0 0 15 14" preserveAspectRatio="none"><path d="M0.3 0.8 Q0.3 0 1.1 0 L5.9 0 L7.1 1.1 L14.2 1.1 Q15 1.1 15 1.9 L15 13.2 Q15 14 14.2 14 L1.1 14 Q0.3 14 0.3 13.2 Z" fill="#fec10f"/><path d="M0.3 0.8 Q0.3 0 1.1 0 L5.9 0 L7.1 1.1 L14.2 1.1 Q15 1.1 15 1.9 L15 2.6 L0.3 2.6 Z" fill="#f2b10a"/></svg>
<div class="t" style="left:75.60px;top:232.00px;font-size:12.6px;">_CCC SafetyNet</div>
<svg class="a" style="left:53.6px;top:250.4px" width="15" height="13.6" viewBox="0 0 15 14" preserveAspectRatio="none"><path d="M0.3 0.8 Q0.3 0 1.1 0 L5.9 0 L7.1 1.1 L14.2 1.1 Q15 1.1 15 1.9 L15 13.2 Q15 14 14.2 14 L1.1 14 Q0.3 14 0.3 13.2 Z" fill="#fec10f"/><path d="M0.3 0.8 Q0.3 0 1.1 0 L5.9 0 L7.1 1.1 L14.2 1.1 Q15 1.1 15 1.9 L15 2.6 L0.3 2.6 Z" fill="#f2b10a"/></svg>
<div class="t" style="left:75.60px;top:253.00px;font-size:12.6px;">bin</div>
<svg class="a" style="left:53.6px;top:271.15000000000003px" width="15" height="13.6" viewBox="0 0 15 14" preserveAspectRatio="none"><path d="M0.3 0.8 Q0.3 0 1.1 0 L5.9 0 L7.1 1.1 L14.2 1.1 Q15 1.1 15 1.9 L15 13.2 Q15 14 14.2 14 L1.1 14 Q0.3 14 0.3 13.2 Z" fill="#fec10f"/><path d="M0.3 0.8 Q0.3 0 1.1 0 L5.9 0 L7.1 1.1 L14.2 1.1 Q15 1.1 15 1.9 L15 2.6 L0.3 2.6 Z" fill="#f2b10a"/></svg>
<div class="t" style="left:75.60px;top:274.00px;font-size:12.6px;">cores</div>
<svg class="a" style="left:53.6px;top:291.90000000000003px" width="15" height="13.6" viewBox="0 0 15 14" preserveAspectRatio="none"><path d="M0.3 0.8 Q0.3 0 1.1 0 L5.9 0 L7.1 1.1 L14.2 1.1 Q15 1.1 15 1.9 L15 13.2 Q15 14 14.2 14 L1.1 14 Q0.3 14 0.3 13.2 Z" fill="#fec10f"/><path d="M0.3 0.8 Q0.3 0 1.1 0 L5.9 0 L7.1 1.1 L14.2 1.1 Q15 1.1 15 1.9 L15 2.6 L0.3 2.6 Z" fill="#f2b10a"/></svg>
<div class="t" style="left:75.60px;top:295.00px;font-size:12.6px;">dev</div>
<svg class="a" style="left:32.6px;top:316.3px" width="8" height="9.5" viewBox="0 0 8 9.5"><path d="M0 0 L8 4.75 L0 9.5 Z" fill="#777"/></svg>
<svg class="a" style="left:53.6px;top:312.65000000000003px" width="15" height="13.6" viewBox="0 0 15 14" preserveAspectRatio="none"><path d="M0.3 0.8 Q0.3 0 1.1 0 L5.9 0 L7.1 1.1 L14.2 1.1 Q15 1.1 15 1.9 L15 13.2 Q15 14 14.2 14 L1.1 14 Q0.3 14 0.3 13.2 Z" fill="#fec10f"/><path d="M0.3 0.8 Q0.3 0 1.1 0 L5.9 0 L7.1 1.1 L14.2 1.1 Q15 1.1 15 1.9 L15 2.6 L0.3 2.6 Z" fill="#f2b10a"/></svg>
<div class="t" style="left:75.60px;top:315.00px;font-size:12.6px;">etc</div>
<div class="a" style="left:1px;top:325.5px;width:718px;height:8px;background:#e8e8e8;border-top:1px solid #d6d6d6;border-bottom:1px solid #d6d6d6"></div>
<div class="a" style="left:727px;top:178px;width:772px;height:91.5px;background:linear-gradient(90deg,#fff 96%,#f4f4f4)"></div>
<svg class="a" style="left:741px;top:186.7px" width="9.5" height="8" viewBox="0 0 9.5 8"><path d="M0 0 L9.5 0 L4.75 8 Z" fill="#777"/></svg>
<svg class="a" style="left:762.9px;top:183px" width="15" height="14" viewBox="0 0 15 14" preserveAspectRatio="none"><path d="M0.3 0.8 Q0.3 0 1.1 0 L5.9 0 L7.1 1.1 L14.2 1.1 Q15 1.1 15 1.9 L15 13.2 Q15 14 14.2 14 L1.1 14 Q0.3 14 0.3 13.2 Z" fill="#fec10f"/><path d="M0.3 0.8 Q0.3 0 1.1 0 L5.9 0 L7.1 1.1 L14.2 1.1 Q15 1.1 15 1.9 L15 2.6 L0.3 2.6 Z" fill="#f2b10a"/></svg>
<div class="t" style="left:784.50px;top:186.00px;font-size:12.6px;">/</div>
<svg class="a" style="left:758px;top:206.5px" width="8" height="9.5" viewBox="0 0 8 9.5"><path d="M0 0 L8 4.75 L0 9.5 Z" fill="#777"/></svg>
<svg class="a" style="left:779px;top:204px" width="18" height="14" viewBox="0 0 18 14"><path d="M0.3 0.8 Q0.3 0 1.1 0 L5.9 0 L7.1 1.1 L13.4 1.1 Q14.2 1.1 14.2 1.9 L14.2 13.3 L0.3 13.3 Z" fill="#eaa800"/><path d="M1.6 5 L17.6 5 L15.6 13.4 L0.3 13.4 L0.3 6.3 Q0.3 5 1.6 5 Z" fill="#fec10f"/></svg>
<div class="a" style="left:797.5px;top:201px;width:72px;height:20.5px;background:#c8c8c8"></div>
<div class="t" style="left:801.00px;top:206.00px;font-size:12.6px;color:#fff;">public_html</div>
<svg class="a" style="left:779px;top:225px" width="15" height="14" viewBox="0 0 15 14" preserveAspectRatio="none"><path d="M0.3 0.8 Q0.3 0 1.1 0 L5.9 0 L7.1 1.1 L14.2 1.1 Q15 1.1 15 1.9 L15 13.2 Q15 14 14.2 14 L1.1 14 Q0.3 14 0.3 13.2 Z" fill="#fec10f"/><path d="M0.3 0.8 Q0.3 0 1.1 0 L5.9 0 L7.1 1.1 L14.2 1.1 Q15 1.1 15 1.9 L15 2.6 L0.3 2.6 Z" fill="#f2b10a"/></svg>
<div class="t" style="left:781.00px;top:225.00px;font-size:17px;color:#000;">?</div>
<div class="t" style="left:801.00px;top:228.00px;font-size:12.6px;">tmp</div>
<div class="a" style="left:727px;top:269px;width:773px;height:7px;background:#ececec;border-top:1px solid #d2d2d2;border-bottom:1px solid #d2d2d2"></div>
<div class="a" style="left:1px;top:334px;width:701px;height:358px;background:#fff"></div>
<div class="a" style="left:1px;top:334px;width:701px;height:18px;background:#f3f3f3;border-bottom:1px solid #dcdcdc"></div>
<div class="t" style="left:5.80px;top:338.00px;font-size:11.7px;letter-spacing:0.3px;">Filename</div>
<svg class="a" style="left:62.5px;top:338.5px" width="15" height="8"><path d="M1.2 7 L7.5 1.3 L13.8 7" fill="none" stroke="#444" stroke-width="2.2"/></svg>
<div class="a" style="left:132.3px;top:337px;width:1.3px;height:12px;background:#d4d4d4"></div>
<div class="t" style="left:-84.50px;width:300px;text-align:right;top:338.00px;font-size:11.7px;letter-spacing:0.3px;margin-right:-0.3px;">Filesize</div>
<div class="a" style="left:219.5px;top:337px;width:1.3px;height:12px;background:#d4d4d4"></div>
<div class="t" style="left:224.00px;top:338.00px;font-size:11.7px;letter-spacing:0.3px;">Filetype</div>
<div class="a" style="left:328.8px;top:337px;width:1.3px;height:12px;background:#d4d4d4"></div>
<div class="t" style="left:333.50px;top:338.00px;font-size:11.7px;letter-spacing:0.3px;">Last modified</div>
<div class="a" style="left:459.5px;top:337px;width:1.3px;height:12px;background:#d4d4d4"></div>
<div class="a" style="left:702.5px;top:333.2px;width:17px;height:359px;background:#f7f7f7;border-left:1px solid #e4e4e4"></div>
<div class="a" style="left:707px;top:336px;width:8.5px;height:228px;background:#b2b2b2;border-radius:4.2px"></div>
<div class="a" style="left:0;top:0;width:1500px;height:830px;clip-path:inset(352px 0 138px 0)">
<svg class="a" style="left:1.1px;top:355.1px" width="15" height="14" viewBox="0 0 15 14" preserveAspectRatio="none"><path d="M0.3 0.8 Q0.3 0 1.1 0 L5.9 0 L7.1 1.1 L14.2 1.1 Q15 1.1 15 1.9 L15 13.2 Q15 14 14.2 14 L1.1 14 Q0.3 14 0.3 13.2 Z" fill="#fec10f"/><path d="M0.3 0.8 Q0.3 0 1.1 0 L5.9 0 L7.1 1.1 L14.2 1.1 Q15 1.1 15 1.9 L15 2.6 L0.3 2.6 Z" fill="#f2b10a"/></svg>
<div class="t" style="left:24.20px;top:355.00px;font-size:15.2px;">..</div>
<svg class="a" style="left:1.1px;top:376.93px" width="15" height="14" viewBox="0 0 15 14" preserveAspectRatio="none"><path d="M0.3 0.8 Q0.3 0 1.1 0 L5.9 0 L7.1 1.1 L14.2 1.1 Q15 1.1 15 1.9 L15 13.2 Q15 14 14.2 14 L1.1 14 Q0.3 14 0.3 13.2 Z" fill="#fec10f"/><path d="M0.3 0.8 Q0.3 0 1.1 0 L5.9 0 L7.1 1.1 L14.2 1.1 Q15 1.1 15 1.9 L15 2.6 L0.3 2.6 Z" fill="#f2b10a"/></svg>
<div class="t" style="left:24.20px;top:377.00px;font-size:15.2px;">.Trash</div>
<div class="t" style="left:220.10px;top:377.00px;font-size:15.2px;">Directory</div>
<div class="t" style="left:329.20px;top:377.00px;font-size:15.2px;">09/09/2019 16:4...</div>
<svg class="a" style="left:1.1px;top:398.76px" width="15" height="14" viewBox="0 0 15 14" preserveAspectRatio="none"><path d="M0.3 0.8 Q0.3 0 1.1 0 L5.9 0 L7.1 1.1 L14.2 1.1 Q15 1.1 15 1.9 L15 13.2 Q15 14 14.2 14 L1.1 14 Q0.3 14 0.3 13.2 Z" fill="#fec10f"/><path d="M0.3 0.8 Q0.3 0 1.1 0 L5.9 0 L7.1 1.1 L14.2 1.1 Q15 1.1 15 1.9 L15 2.6 L0.3 2.6 Z" fill="#f2b10a"/></svg>
<div class="t" style="left:24.20px;top:399.00px;font-size:15.2px;">.bash_sessions</div>
<div class="t" style="left:220.10px;top:399.00px;font-size:15.2px;">Directory</div>
<div class="t" style="left:329.20px;top:399.00px;font-size:15.2px;">05/23/2019 17:5...</div>
<svg class="a" style="left:1.1px;top:420.59000000000003px" width="15" height="14" viewBox="0 0 15 14" preserveAspectRatio="none"><path d="M0.3 0.8 Q0.3 0 1.1 0 L5.9 0 L7.1 1.1 L14.2 1.1 Q15 1.1 15 1.9 L15 13.2 Q15 14 14.2 14 L1.1 14 Q0.3 14 0.3 13.2 Z" fill="#fec10f"/><path d="M0.3 0.8 Q0.3 0 1.1 0 L5.9 0 L7.1 1.1 L14.2 1.1 Q15 1.1 15 1.9 L15 2.6 L0.3 2.6 Z" fill="#f2b10a"/></svg>
<div class="t" style="left:24.20px;top:421.00px;font-size:15.2px;">.cache</div>
<div class="t" style="left:220.10px;top:421.00px;font-size:15.2px;">Directory</div>
<div class="t" style="left:329.20px;top:421.00px;font-size:15.2px;">01/17/2019 09:0...</div>
<svg class="a" style="left:1.1px;top:442.42px" width="15" height="14" viewBox="0 0 15 14" preserveAspectRatio="none"><path d="M0.3 0.8 Q0.3 0 1.1 0 L5.9 0 L7.1 1.1 L14.2 1.1 Q15 1.1 15 1.9 L15 13.2 Q15 14 14.2 14 L1.1 14 Q0.3 14 0.3 13.2 Z" fill="#fec10f"/><path d="M0.3 0.8 Q0.3 0 1.1 0 L5.9 0 L7.1 1.1 L14.2 1.1 Q15 1.1 15 1.9 L15 2.6 L0.3 2.6 Z" fill="#f2b10a"/></svg>
<div class="t" style="left:24.20px;top:442.00px;font-size:15.2px;">.config</div>
<div class="t" style="left:220.10px;top:442.00px;font-size:15.2px;">Directory</div>
<div class="t" style="left:329.20px;top:442.00px;font-size:15.2px;">01/29/2019 13:5...</div>
<svg class="a" style="left:1.1px;top:464.25px" width="15" height="14" viewBox="0 0 15 14" preserveAspectRatio="none"><path d="M0.3 0.8 Q0.3 0 1.1 0 L5.9 0 L7.1 1.1 L14.2 1.1 Q15 1.1 15 1.9 L15 13.2 Q15 14 14.2 14 L1.1 14 Q0.3 14 0.3 13.2 Z" fill="#fec10f"/><path d="M0.3 0.8 Q0.3 0 1.1 0 L5.9 0 L7.1 1.1 L14.2 1.1 Q15 1.1 15 1.9 L15 2.6 L0.3 2.6 Z" fill="#f2b10a"/></svg>
<div class="t" style="left:24.20px;top:464.00px;font-size:15.2px;">.docker</div>
<div class="t" style="left:220.10px;top:464.00px;font-size:15.2px;">Directory</div>
<div class="t" style="left:329.20px;top:464.00px;font-size:15.2px;">01/15/2019 07:0...</div>
<svg class="a" style="left:1.1px;top:486.08000000000004px" width="15" height="14" viewBox="0 0 15 14" preserveAspectRatio="none"><path d="M0.3 0.8 Q0.3 0 1.1 0 L5.9 0 L7.1 1.1 L14.2 1.1 Q15 1.1 15 1.9 L15 13.2 Q15 14 14.2 14 L1.1 14 Q0.3 14 0.3 13.2 Z" fill="#fec10f"/><path d="M0.3 0.8 Q0.3 0 1.1 0 L5.9 0 L7.1 1.1 L14.2 1.1 Q15 1.1 15 1.9 L15 2.6 L0.3 2.6 Z" fill="#f2b10a"/></svg>
<div class="t" style="left:24.20px;top:486.00px;font-size:15.2px;">.local</div>
<div class="t" style="left:220.10px;top:486.00px;font-size:15.2px;">Directory</div>
<div class="t" style="left:329.20px;top:486.00px;font-size:15.2px;">01/17/2019 09:0...</div>
<svg class="a" style="left:1.1px;top:507.9100000000001px" width="15" height="14" viewBox="0 0 15 14" preserveAspectRatio="none"><path d="M0.3 0.8 Q0.3 0 1.1 0 L5.9 0 L7.1 1.1 L14.2 1.1 Q15 1.1 15 1.9 L15 13.2 Q15 14 14.2 14 L1.1 14 Q0.3 14 0.3 13.2 Z" fill="#fec10f"/><path d="M0.3 0.8 Q0.3 0 1.1 0 L5.9 0 L7.1 1.1 L14.2 1.1 Q15 1.1 15 1.9 L15 2.6 L0.3 2.6 Z" fill="#f2b10a"/></svg>
<div class="t" style="left:24.20px;top:508.00px;font-size:15.2px;">.putty</div>
<div class="t" style="left:220.10px;top:508.00px;font-size:15.2px;">Directory</div>
<div class="t" style="left:329.20px;top:508.00px;font-size:15.2px;">05/23/2019 11:3...</div>
<svg class="a" style="left:1.1px;top:529.74px" width="15" height="14" viewBox="0 0 15 14" preserveAspectRatio="none"><path d="M0.3 0.8 Q0.3 0 1.1 0 L5.9 0 L7.1 1.1 L14.2 1.1 Q15 1.1 15 1.9 L15 13.2 Q15 14 14.2 14 L1.1 14 Q0.3 14 0.3 13.2 Z" fill="#fec10f"/><path d="M0.3 0.8 Q0.3 0 1.1 0 L5.9 0 L7.1 1.1 L14.2 1.1 Q15 1.1 15 1.9 L15 2.6 L0.3 2.6 Z" fill="#f2b10a"/></svg>
<div class="t" style="left:24.20px;top:530.00px;font-size:15.2px;">Applications</div>
<div class="t" style="left:220.10px;top:530.00px;font-size:15.2px;">Directory</div>
<div class="t" style="left:329.20px;top:530.00px;font-size:15.2px;">05/01/2019 15:5...</div>
<svg class="a" style="left:1.1px;top:551.5699999999999px" width="15" height="14" viewBox="0 0 15 14" preserveAspectRatio="none"><path d="M0.3 0.8 Q0.3 0 1.1 0 L5.9 0 L7.1 1.1 L14.2 1.1 Q15 1.1 15 1.9 L15 13.2 Q15 14 14.2 14 L1.1 14 Q0.3 14 0.3 13.2 Z" fill="#fec10f"/><path d="M0.3 0.8 Q0.3 0 1.1 0 L5.9 0 L7.1 1.1 L14.2 1.1 Q15 1.1 15 1.9 L15 2.6 L0.3 2.6 Z" fill="#f2b10a"/></svg>
<div class="t" style="left:24.20px;top:552.00px;font-size:15.2px;">Desktop</div>
<div class="t" style="left:220.10px;top:552.00px;font-size:15.2px;">Directory</div>
<div class="t" style="left:329.20px;top:552.00px;font-size:15.2px;">09/10/2019 13:0...</div>
<svg class="a" style="left:1.1px;top:573.4px" width="15" height="14" viewBox="0 0 15 14" preserveAspectRatio="none"><path d="M0.3 0.8 Q0.3 0 1.1 0 L5.9 0 L7.1 1.1 L14.2 1.1 Q15 1.1 15 1.9 L15 13.2 Q15 14 14.2 14 L1.1 14 Q0.3 14 0.3 13.2 Z" fill="#fec10f"/><path d="M0.3 0.8 Q0.3 0 1.1 0 L5.9 0 L7.1 1.1 L14.2 1.1 Q15 1.1 15 1.9 L15 2.6 L0.3 2.6 Z" fill="#f2b10a"/></svg>
<div class="t" style="left:24.20px;top:573.00px;font-size:15.2px;">Documents</div>
<div class="t" style="left:220.10px;top:573.00px;font-size:15.2px;">Directory</div>
<div class="t" style="left:329.20px;top:573.00px;font-size:15.2px;">04/30/2019 12:1...</div>
<svg class="a" style="left:1.1px;top:595.23px" width="15" height="14" viewBox="0 0 15 14" preserveAspectRatio="none"><path d="M0.3 0.8 Q0.3 0 1.1 0 L5.9 0 L7.1 1.1 L14.2 1.1 Q15 1.1 15 1.9 L15 13.2 Q15 14 14.2 14 L1.1 14 Q0.3 14 0.3 13.2 Z" fill="#fec10f"/><path d="M0.3 0.8 Q0.3 0 1.1 0 L5.9 0 L7.1 1.1 L14.2 1.1 Q15 1.1 15 1.9 L15 2.6 L0.3 2.6 Z" fill="#f2b10a"/></svg>
<div class="t" style="left:24.20px;top:595.00px;font-size:15.2px;">Downloads</div>
<div class="t" style="left:220.10px;top:595.00px;font-size:15.2px;">Directory</div>
<div class="t" style="left:329.20px;top:595.00px;font-size:15.2px;">09/09/2019 16:4...</div>
<svg class="a" style="left:1.1px;top:617.06px" width="15" height="14" viewBox="0 0 15 14" preserveAspectRatio="none"><path d="M0.3 0.8 Q0.3 0 1.1 0 L5.9 0 L7.1 1.1 L14.2 1.1 Q15 1.1 15 1.9 L15 13.2 Q15 14 14.2 14 L1.1 14 Q0.3 14 0.3 13.2 Z" fill="#fec10f"/><path d="M0.3 0.8 Q0.3 0 1.1 0 L5.9 0 L7.1 1.1 L14.2 1.1 Q15 1.1 15 1.9 L15 2.6 L0.3 2.6 Z" fill="#f2b10a"/></svg>
<div class="t" style="left:24.20px;top:617.00px;font-size:15.2px;">Library</div>
<div class="t" style="left:220.10px;top:617.00px;font-size:15.2px;">Directory</div>
<div class="t" style="left:329.20px;top:617.00px;font-size:15.2px;">09/10/2019 13:2...</div>
<svg class="a" style="left:1.1px;top:638.89px" width="15" height="14" viewBox="0 0 15 14" preserveAspectRatio="none"><path d="M0.3 0.8 Q0.3 0 1.1 0 L5.9 0 L7.1 1.1 L14.2 1.1 Q15 1.1 15 1.9 L15 13.2 Q15 14 14.2 14 L1.1 14 Q0.3 14 0.3 13.2 Z" fill="#fec10f"/><path d="M0.3 0.8 Q0.3 0 1.1 0 L5.9 0 L7.1 1.1 L14.2 1.1 Q15 1.1 15 1.9 L15 2.6 L0.3 2.6 Z" fill="#f2b10a"/></svg>
<div class="t" style="left:24.20px;top:639.00px;font-size:15.2px;">Local Sites</div>
<div class="t" style="left:220.10px;top:639.00px;font-size:15.2px;">Directory</div>
<div class="t" style="left:329.20px;top:639.00px;font-size:15.2px;">03/01/2019 11:1...</div>
<svg class="a" style="left:1.1px;top:660.72px" width="15" height="14" viewBox="0 0 15 14" preserveAspectRatio="none"><path d="M0.3 0.8 Q0.3 0 1.1 0 L5.9 0 L7.1 1.1 L14.2 1.1 Q15 1.1 15 1.9 L15 13.2 Q15 14 14.2 14 L1.1 14 Q0.3 14 0.3 13.2 Z" fill="#fec10f"/><path d="M0.3 0.8 Q0.3 0 1.1 0 L5.9 0 L7.1 1.1 L14.2 1.1 Q15 1.1 15 1.9 L15 2.6 L0.3 2.6 Z" fill="#f2b10a"/></svg>
<div class="t" style="left:24.20px;top:661.00px;font-size:15.2px;">Movies</div>
<div class="t" style="left:220.10px;top:661.00px;font-size:15.2px;">Directory</div>
<div class="t" style="left:329.20px;top:661.00px;font-size:15.2px;">04/15/2019 11:1...</div>
<svg class="a" style="left:1.1px;top:682.55px" width="15" height="14" viewBox="0 0 15 14" preserveAspectRatio="none"><path d="M0.3 0.8 Q0.3 0 1.1 0 L5.9 0 L7.1 1.1 L14.2 1.1 Q15 1.1 15 1.9 L15 13.2 Q15 14 14.2 14 L1.1 14 Q0.3 14 0.3 13.2 Z" fill="#fec10f"/><path d="M0.3 0.8 Q0.3 0 1.1 0 L5.9 0 L7.1 1.1 L14.2 1.1 Q15 1.1 15 1.9 L15 2.6 L0.3 2.6 Z" fill="#f2b10a"/></svg>
<div class="t" style="left:24.20px;top:683.00px;font-size:15.2px;">Music</div>
<div class="t" style="left:220.10px;top:683.00px;font-size:15.2px;">Directory</div>
<div class="t" style="left:329.20px;top:683.00px;font-size:15.2px;">03/07/2019 08:4...</div>
</div>
<div class="a" style="left:727px;top:277px;width:756px;height:415px;background:#fff"></div>
<div class="a" style="left:727px;top:276px;width:755.5px;height:18px;background:#f3f3f3;border-bottom:1px solid #dcdcdc"></div>
<div class="t" style="left:731.40px;top:280.00px;font-size:11.7px;letter-spacing:0.3px;">Filename</div>
<svg class="a" style="left:788px;top:280.5px" width="15" height="8"><path d="M1.2 7 L7.5 1.3 L13.8 7" fill="none" stroke="#444" stroke-width="2.2"/></svg>
<div class="a" style="left:851.8px;top:279px;width:1.3px;height:12px;background:#d4d4d4"></div>
<div class="t" style="left:630.20px;width:300px;text-align:right;top:280.00px;font-size:11.7px;letter-spacing:0.3px;margin-right:-0.3px;">Filesize</div>
<div class="a" style="left:933.3px;top:279px;width:1.3px;height:12px;background:#d4d4d4"></div>
<div class="t" style="left:938.40px;top:280.00px;font-size:11.7px;letter-spacing:0.3px;">Filetype</div>
<div class="a" style="left:1020.8px;top:279px;width:1.3px;height:12px;background:#d4d4d4"></div>
<div class="t" style="left:1025.80px;top:280.00px;font-size:11.7px;letter-spacing:0.3px;">Last modified</div>
<div class="a" style="left:1129.8px;top:279px;width:1.3px;height:12px;background:#d4d4d4"></div>
<div class="t" style="left:1134.60px;top:280.00px;font-size:11.7px;letter-spacing:0.3px;">Permissions</div>
<div class="a" style="left:1216.8px;top:279px;width:1.3px;height:12px;background:#d4d4d4"></div>
<div class="t" style="left:1222.00px;top:280.00px;font-size:11.7px;letter-spacing:0.3px;">Owner/Group</div>
<div class="a" style="left:1305.5px;top:279px;width:1.3px;height:12px;background:#d4d4d4"></div>
<div class="a" style="left:1482.5px;top:276px;width:17px;height:416px;background:#f7f7f7;border-left:1px solid #e4e4e4;border-right:1px solid #e0e0e0"></div>
<div class="a" style="left:1487px;top:279.6px;width:8.7px;height:305.5px;background:#b2b2b2;border-radius:4.3px"></div>
<div class="a" style="left:0;top:0;width:1500px;height:830px;clip-path:inset(294.5px 0 138px 0)">
<svg class="a" style="left:726.8px;top:298.0px" width="15" height="14" viewBox="0 0 15 14" preserveAspectRatio="none"><path d="M0.3 0.8 Q0.3 0 1.1 0 L5.9 0 L7.1 1.1 L14.2 1.1 Q15 1.1 15 1.9 L15 13.2 Q15 14 14.2 14 L1.1 14 Q0.3 14 0.3 13.2 Z" fill="#fec10f"/><path d="M0.3 0.8 Q0.3 0 1.1 0 L5.9 0 L7.1 1.1 L14.2 1.1 Q15 1.1 15 1.9 L15 2.6 L0.3 2.6 Z" fill="#f2b10a"/></svg>
<div class="t" style="left:750.00px;top:298.00px;font-size:15.2px;">..</div>
<svg class="a" style="left:726.8px;top:319.83px" width="15" height="14" viewBox="0 0 15 14" preserveAspectRatio="none"><path d="M0.3 0.8 Q0.3 0 1.1 0 L5.9 0 L7.1 1.1 L14.2 1.1 Q15 1.1 15 1.9 L15 13.2 Q15 14 14.2 14 L1.1 14 Q0.3 14 0.3 13.2 Z" fill="#fec10f"/><path d="M0.3 0.8 Q0.3 0 1.1 0 L5.9 0 L7.1 1.1 L14.2 1.1 Q15 1.1 15 1.9 L15 2.6 L0.3 2.6 Z" fill="#f2b10a"/></svg>
<div class="t" style="left:750.00px;top:320.00px;font-size:15.2px;">wp-admin</div>
<div class="t" style="left:934.50px;top:320.00px;font-size:15.2px;">Directory</div>
<div class="t" style="left:1022.00px;top:320.00px;font-size:15.2px;">07/26/2019 1...</div>
<div class="t" style="left:1131.00px;top:320.00px;font-size:15.2px;">0755</div>
<div class="t" style="left:1218.00px;top:320.00px;font-size:15.2px;">9498344 ...</div>
<svg class="a" style="left:726.8px;top:341.65999999999997px" width="15" height="14" viewBox="0 0 15 14" preserveAspectRatio="none"><path d="M0.3 0.8 Q0.3 0 1.1 0 L5.9 0 L7.1 1.1 L14.2 1.1 Q15 1.1 15 1.9 L15 13.2 Q15 14 14.2 14 L1.1 14 Q0.3 14 0.3 13.2 Z" fill="#fec10f"/><path d="M0.3 0.8 Q0.3 0 1.1 0 L5.9 0 L7.1 1.1 L14.2 1.1 Q15 1.1 15 1.9 L15 2.6 L0.3 2.6 Z" fill="#f2b10a"/></svg>
<div class="t" style="left:750.00px;top:342.00px;font-size:15.2px;">wp-content</div>
<div class="t" style="left:934.50px;top:342.00px;font-size:15.2px;">Directory</div>
<div class="t" style="left:1022.00px;top:342.00px;font-size:15.2px;">09/10/2019 1...</div>
<div class="t" style="left:1131.00px;top:342.00px;font-size:15.2px;">0755</div>
<div class="t" style="left:1218.00px;top:342.00px;font-size:15.2px;">9498344 ...</div>
<svg class="a" style="left:726.8px;top:363.49px" width="15" height="14" viewBox="0 0 15 14" preserveAspectRatio="none"><path d="M0.3 0.8 Q0.3 0 1.1 0 L5.9 0 L7.1 1.1 L14.2 1.1 Q15 1.1 15 1.9 L15 13.2 Q15 14 14.2 14 L1.1 14 Q0.3 14 0.3 13.2 Z" fill="#fec10f"/><path d="M0.3 0.8 Q0.3 0 1.1 0 L5.9 0 L7.1 1.1 L14.2 1.1 Q15 1.1 15 1.9 L15 2.6 L0.3 2.6 Z" fill="#f2b10a"/></svg>
<div class="t" style="left:750.00px;top:364.00px;font-size:15.2px;">wp-includes</div>
<div class="t" style="left:934.50px;top:364.00px;font-size:15.2px;">Directory</div>
<div class="t" style="left:1022.00px;top:364.00px;font-size:15.2px;">07/26/2019 1...</div>
<div class="t" style="left:1131.00px;top:364.00px;font-size:15.2px;">0755</div>
<div class="t" style="left:1218.00px;top:364.00px;font-size:15.2px;">9498344 ...</div>
<svg class="a" style="left:729px;top:384.32px" width="14" height="18" viewBox="0 0 14 18"><path d="M1.6 0.7 L9.6 0.7 L13.3 4.4 L13.3 16.2 Q13.3 17.2 12.3 17.2 L1.6 17.2 Q0.7 17.2 0.7 16.2 L0.7 1.6 Q0.7 0.7 1.6 0.7 Z" fill="#fff" stroke="#e0e0e0" stroke-width="1.2"/><path d="M1.5 17 L12.5 17" stroke="#d9d9d9" stroke-width="1.2"/></svg>
<div class="t" style="left:750.00px;top:386.00px;font-size:15.2px;">.htaccess</div>
<div class="t" style="left:625.50px;width:300px;text-align:right;top:386.00px;font-size:15.2px;">235</div>
<div class="t" style="left:934.50px;top:386.00px;font-size:15.2px;">File</div>
<div class="t" style="left:1022.00px;top:386.00px;font-size:15.2px;">07/30/2019 1...</div>
<div class="t" style="left:1131.00px;top:386.00px;font-size:15.2px;">0644</div>
<div class="t" style="left:1218.00px;top:386.00px;font-size:15.2px;">9498344 ...</div>
<svg class="a" style="left:729px;top:406.15px" width="14" height="18" viewBox="0 0 14 18"><path d="M1.6 0.7 L9.6 0.7 L13.3 4.4 L13.3 16.2 Q13.3 17.2 12.3 17.2 L1.6 17.2 Q0.7 17.2 0.7 16.2 L0.7 1.6 Q0.7 0.7 1.6 0.7 Z" fill="#fff" stroke="#e0e0e0" stroke-width="1.2"/><path d="M1.5 17 L12.5 17" stroke="#d9d9d9" stroke-width="1.2"/></svg>
<div class="t" style="left:750.00px;top:408.00px;font-size:15.2px;">.htaccess_o...</div>
<div class="t" style="left:625.50px;width:300px;text-align:right;top:408.00px;font-size:15.2px;">170</div>
<div class="t" style="left:934.50px;top:408.00px;font-size:15.2px;">File</div>
<div class="t" style="left:1022.00px;top:408.00px;font-size:15.2px;">07/26/2019 1...</div>
<div class="t" style="left:1131.00px;top:408.00px;font-size:15.2px;">0644</div>
<div class="t" style="left:1218.00px;top:408.00px;font-size:15.2px;">9498344 ...</div>
<svg class="a" style="left:729px;top:427.98px" width="14" height="18" viewBox="0 0 14 18"><path d="M1.6 0.7 L9.6 0.7 L13.3 4.4 L13.3 16.2 Q13.3 17.2 12.3 17.2 L1.6 17.2 Q0.7 17.2 0.7 16.2 L0.7 1.6 Q0.7 0.7 1.6 0.7 Z" fill="#fff" stroke="#e0e0e0" stroke-width="1.2"/><path d="M1.5 17 L12.5 17" stroke="#d9d9d9" stroke-width="1.2"/></svg>
<div class="t" style="left:750.00px;top:429.00px;font-size:15.2px;">index.php</div>
<div class="t" style="left:625.50px;width:300px;text-align:right;top:429.00px;font-size:15.2px;">420</div>
<div class="t" style="left:934.50px;top:429.00px;font-size:15.2px;">php-file</div>
<div class="t" style="left:1022.00px;top:429.00px;font-size:15.2px;">07/26/2019 1...</div>
<div class="t" style="left:1131.00px;top:429.00px;font-size:15.2px;">0644</div>
<div class="t" style="left:1218.00px;top:429.00px;font-size:15.2px;">9498344 ...</div>
<svg class="a" style="left:729px;top:449.81px" width="14" height="18" viewBox="0 0 14 18"><path d="M1.6 0.7 L9.6 0.7 L13.3 4.4 L13.3 16.2 Q13.3 17.2 12.3 17.2 L1.6 17.2 Q0.7 17.2 0.7 16.2 L0.7 1.6 Q0.7 0.7 1.6 0.7 Z" fill="#fff" stroke="#e0e0e0" stroke-width="1.2"/><path d="M1.5 17 L12.5 17" stroke="#d9d9d9" stroke-width="1.2"/></svg>
<div class="t" style="left:750.00px;top:451.00px;font-size:15.2px;">license.txt</div>
<div class="t" style="left:625.50px;width:300px;text-align:right;top:451.00px;font-size:15.2px;">19,935</div>
<div class="t" style="left:934.50px;top:451.00px;font-size:15.2px;">txt-file</div>
<div class="t" style="left:1022.00px;top:451.00px;font-size:15.2px;">07/26/2019 1...</div>
<div class="t" style="left:1131.00px;top:451.00px;font-size:15.2px;">0644</div>
<div class="t" style="left:1218.00px;top:451.00px;font-size:15.2px;">9498344 ...</div>
<svg class="a" style="left:729px;top:471.64px" width="14" height="18" viewBox="0 0 14 18"><path d="M1.6 0.7 L9.6 0.7 L13.3 4.4 L13.3 16.2 Q13.3 17.2 12.3 17.2 L1.6 17.2 Q0.7 17.2 0.7 16.2 L0.7 1.6 Q0.7 0.7 1.6 0.7 Z" fill="#fff" stroke="#e0e0e0" stroke-width="1.2"/><path d="M1.5 17 L12.5 17" stroke="#d9d9d9" stroke-width="1.2"/></svg>
<div class="t" style="left:750.00px;top:473.00px;font-size:15.2px;">phpinfo.php</div>
<div class="t" style="left:625.50px;width:300px;text-align:right;top:473.00px;font-size:15.2px;">22</div>
<div class="t" style="left:934.50px;top:473.00px;font-size:15.2px;">php-file</div>
<div class="t" style="left:1022.00px;top:473.00px;font-size:15.2px;">09/10/2019 1...</div>
<div class="t" style="left:1131.00px;top:473.00px;font-size:15.2px;">0644</div>
<div class="t" style="left:1218.00px;top:473.00px;font-size:15.2px;">9498344 ...</div>
<svg class="a" style="left:729px;top:493.46999999999997px" width="14" height="18" viewBox="0 0 14 18"><path d="M1.6 0.7 L9.6 0.7 L13.3 4.4 L13.3 16.2 Q13.3 17.2 12.3 17.2 L1.6 17.2 Q0.7 17.2 0.7 16.2 L0.7 1.6 Q0.7 0.7 1.6 0.7 Z" fill="#fff" stroke="#e0e0e0" stroke-width="1.2"/><path d="M1.5 17 L12.5 17" stroke="#d9d9d9" stroke-width="1.2"/></svg>
<svg class="a" style="left:730.5px;top:497.37px" width="10" height="10" viewBox="0 0 10 10"><circle cx="5" cy="5" r="4.6" fill="#db4437"/><path d="M5 5 L5 0.4 A4.6 4.6 0 0 1 9.6 5 Z" fill="#f4c20d"/><path d="M5 5 L9.6 5 A4.6 4.6 0 0 1 1.2 7.6 Z" fill="#0f9d58"/><circle cx="5" cy="5" r="2" fill="#fff"/><circle cx="5" cy="5" r="1.5" fill="#4285f4"/></svg>
<div class="t" style="left:750.00px;top:495.00px;font-size:15.2px;">readme.html</div>
<div class="t" style="left:625.50px;width:300px;text-align:right;top:495.00px;font-size:15.2px;">7,447</div>
<div class="t" style="left:934.50px;top:495.00px;font-size:15.2px;">HTML do...</div>
<div class="t" style="left:1022.00px;top:495.00px;font-size:15.2px;">09/05/2019 ...</div>
<div class="t" style="left:1131.00px;top:495.00px;font-size:15.2px;">0644</div>
<div class="t" style="left:1218.00px;top:495.00px;font-size:15.2px;">9498344 ...</div>
<svg class="a" style="left:729px;top:515.3px" width="14" height="18" viewBox="0 0 14 18"><path d="M1.6 0.7 L9.6 0.7 L13.3 4.4 L13.3 16.2 Q13.3 17.2 12.3 17.2 L1.6 17.2 Q0.7 17.2 0.7 16.2 L0.7 1.6 Q0.7 0.7 1.6 0.7 Z" fill="#fff" stroke="#e0e0e0" stroke-width="1.2"/><path d="M1.5 17 L12.5 17" stroke="#d9d9d9" stroke-width="1.2"/></svg>
<div class="t" style="left:750.00px;top:517.00px;font-size:15.2px;">wp-activate....</div>
<div class="t" style="left:625.50px;width:300px;text-align:right;top:517.00px;font-size:15.2px;">6,919</div>
<div class="t" style="left:934.50px;top:517.00px;font-size:15.2px;">php-file</div>
<div class="t" style="left:1022.00px;top:517.00px;font-size:15.2px;">07/26/2019 1...</div>
<div class="t" style="left:1131.00px;top:517.00px;font-size:15.2px;">0644</div>
<div class="t" style="left:1218.00px;top:517.00px;font-size:15.2px;">9498344 ...</div>
<svg class="a" style="left:729px;top:537.13px" width="14" height="18" viewBox="0 0 14 18"><path d="M1.6 0.7 L9.6 0.7 L13.3 4.4 L13.3 16.2 Q13.3 17.2 12.3 17.2 L1.6 17.2 Q0.7 17.2 0.7 16.2 L0.7 1.6 Q0.7 0.7 1.6 0.7 Z" fill="#fff" stroke="#e0e0e0" stroke-width="1.2"/><path d="M1.5 17 L12.5 17" stroke="#d9d9d9" stroke-width="1.2"/></svg>
<div class="t" style="left:750.00px;top:539.00px;font-size:15.2px;">wp-blog-he...</div>
<div class="t" style="left:625.50px;width:300px;text-align:right;top:539.00px;font-size:15.2px;">369</div>
<div class="t" style="left:934.50px;top:539.00px;font-size:15.2px;">php-file</div>
<div class="t" style="left:1022.00px;top:539.00px;font-size:15.2px;">07/26/2019 1...</div>
<div class="t" style="left:1131.00px;top:539.00px;font-size:15.2px;">0644</div>
<div class="t" style="left:1218.00px;top:539.00px;font-size:15.2px;">9498344 ...</div>
<svg class="a" style="left:729px;top:558.9599999999999px" width="14" height="18" viewBox="0 0 14 18"><path d="M1.6 0.7 L9.6 0.7 L13.3 4.4 L13.3 16.2 Q13.3 17.2 12.3 17.2 L1.6 17.2 Q0.7 17.2 0.7 16.2 L0.7 1.6 Q0.7 0.7 1.6 0.7 Z" fill="#fff" stroke="#e0e0e0" stroke-width="1.2"/><path d="M1.5 17 L12.5 17" stroke="#d9d9d9" stroke-width="1.2"/></svg>
<div class="t" style="left:750.00px;top:560.00px;font-size:15.2px;">wp-commen...</div>
<div class="t" style="left:625.50px;width:300px;text-align:right;top:560.00px;font-size:15.2px;">2,283</div>
<div class="t" style="left:934.50px;top:560.00px;font-size:15.2px;">php-file</div>
<div class="t" style="left:1022.00px;top:560.00px;font-size:15.2px;">07/26/2019 1...</div>
<div class="t" style="left:1131.00px;top:560.00px;font-size:15.2px;">0644</div>
<div class="t" style="left:1218.00px;top:560.00px;font-size:15.2px;">9498344 ...</div>
<svg class="a" style="left:729px;top:580.79px" width="14" height="18" viewBox="0 0 14 18"><path d="M1.6 0.7 L9.6 0.7 L13.3 4.4 L13.3 16.2 Q13.3 17.2 12.3 17.2 L1.6 17.2 Q0.7 17.2 0.7 16.2 L0.7 1.6 Q0.7 0.7 1.6 0.7 Z" fill="#fff" stroke="#e0e0e0" stroke-width="1.2"/><path d="M1.5 17 L12.5 17" stroke="#d9d9d9" stroke-width="1.2"/></svg>
<div class="t" style="left:750.00px;top:582.00px;font-size:15.2px;">wp-config-s...</div>
<div class="t" style="left:625.50px;width:300px;text-align:right;top:582.00px;font-size:15.2px;">2,898</div>
<div class="t" style="left:934.50px;top:582.00px;font-size:15.2px;">php-file</div>
<div class="t" style="left:1022.00px;top:582.00px;font-size:15.2px;">07/26/2019 1...</div>
<div class="t" style="left:1131.00px;top:582.00px;font-size:15.2px;">0644</div>
<div class="t" style="left:1218.00px;top:582.00px;font-size:15.2px;">9498344 ...</div>
<svg class="a" style="left:729px;top:602.62px" width="14" height="18" viewBox="0 0 14 18"><path d="M1.6 0.7 L9.6 0.7 L13.3 4.4 L13.3 16.2 Q13.3 17.2 12.3 17.2 L1.6 17.2 Q0.7 17.2 0.7 16.2 L0.7 1.6 Q0.7 0.7 1.6 0.7 Z" fill="#fff" stroke="#e0e0e0" stroke-width="1.2"/><path d="M1.5 17 L12.5 17" stroke="#d9d9d9" stroke-width="1.2"/></svg>
<div class="t" style="left:750.00px;top:604.00px;font-size:15.2px;">wp-config.p...</div>
<div class="t" style="left:625.50px;width:300px;text-align:right;top:604.00px;font-size:15.2px;">2,852</div>
<div class="t" style="left:934.50px;top:604.00px;font-size:15.2px;">php-file</div>
<div class="t" style="left:1022.00px;top:604.00px;font-size:15.2px;">07/26/2019 1...</div>
<div class="t" style="left:1131.00px;top:604.00px;font-size:15.2px;">0644</div>
<div class="t" style="left:1218.00px;top:604.00px;font-size:15.2px;">9498344 ...</div>
<svg class="a" style="left:729px;top:624.4499999999999px" width="14" height="18" viewBox="0 0 14 18"><path d="M1.6 0.7 L9.6 0.7 L13.3 4.4 L13.3 16.2 Q13.3 17.2 12.3 17.2 L1.6 17.2 Q0.7 17.2 0.7 16.2 L0.7 1.6 Q0.7 0.7 1.6 0.7 Z" fill="#fff" stroke="#e0e0e0" stroke-width="1.2"/><path d="M1.5 17 L12.5 17" stroke="#d9d9d9" stroke-width="1.2"/></svg>
<div class="t" style="left:750.00px;top:626.00px;font-size:15.2px;">wp-cron.php</div>
<div class="t" style="left:625.50px;width:300px;text-align:right;top:626.00px;font-size:15.2px;">3,847</div>
<div class="t" style="left:934.50px;top:626.00px;font-size:15.2px;">php-file</div>
<div class="t" style="left:1022.00px;top:626.00px;font-size:15.2px;">07/26/2019 1...</div>
<div class="t" style="left:1131.00px;top:626.00px;font-size:15.2px;">0644</div>
<div class="t" style="left:1218.00px;top:626.00px;font-size:15.2px;">9498344 ...</div>
<svg class="a" style="left:729px;top:646.28px" width="14" height="18" viewBox="0 0 14 18"><path d="M1.6 0.7 L9.6 0.7 L13.3 4.4 L13.3 16.2 Q13.3 17.2 12.3 17.2 L1.6 17.2 Q0.7 17.2 0.7 16.2 L0.7 1.6 Q0.7 0.7 1.6 0.7 Z" fill="#fff" stroke="#e0e0e0" stroke-width="1.2"/><path d="M1.5 17 L12.5 17" stroke="#d9d9d9" stroke-width="1.2"/></svg>
<div class="t" style="left:750.00px;top:648.00px;font-size:15.2px;">wp-links-op...</div>
<div class="t" style="left:625.50px;width:300px;text-align:right;top:648.00px;font-size:15.2px;">2,502</div>
<div class="t" style="left:934.50px;top:648.00px;font-size:15.2px;">php-file</div>
<div class="t" style="left:1022.00px;top:648.00px;font-size:15.2px;">07/26/2019 1...</div>
<div class="t" style="left:1131.00px;top:648.00px;font-size:15.2px;">0644</div>
<div class="t" style="left:1218.00px;top:648.00px;font-size:15.2px;">9498344 ...</div>
<svg class="a" style="left:729px;top:668.11px" width="14" height="18" viewBox="0 0 14 18"><path d="M1.6 0.7 L9.6 0.7 L13.3 4.4 L13.3 16.2 Q13.3 17.2 12.3 17.2 L1.6 17.2 Q0.7 17.2 0.7 16.2 L0.7 1.6 Q0.7 0.7 1.6 0.7 Z" fill="#fff" stroke="#e0e0e0" stroke-width="1.2"/><path d="M1.5 17 L12.5 17" stroke="#d9d9d9" stroke-width="1.2"/></svg>
<div class="t" style="left:750.00px;top:670.00px;font-size:15.2px;">wp-load.php</div>
<div class="t" style="left:625.50px;width:300px;text-align:right;top:670.00px;font-size:15.2px;">3,306</div>
<div class="t" style="left:934.50px;top:670.00px;font-size:15.2px;">php-file</div>
<div class="t" style="left:1022.00px;top:670.00px;font-size:15.2px;">07/26/2019 1...</div>
<div class="t" style="left:1131.00px;top:670.00px;font-size:15.2px;">0644</div>
<div class="t" style="left:1218.00px;top:670.00px;font-size:15.2px;">9498344 ...</div>
<svg class="a" style="left:729px;top:689.9399999999999px" width="14" height="18" viewBox="0 0 14 18"><path d="M1.6 0.7 L9.6 0.7 L13.3 4.4 L13.3 16.2 Q13.3 17.2 12.3 17.2 L1.6 17.2 Q0.7 17.2 0.7 16.2 L0.7 1.6 Q0.7 0.7 1.6 0.7 Z" fill="#fff" stroke="#e0e0e0" stroke-width="1.2"/><path d="M1.5 17 L12.5 17" stroke="#d9d9d9" stroke-width="1.2"/></svg>
<div class="t" style="left:750.00px;top:691.00px;font-size:15.2px;">wp-login.php</div>
</div>
<div class="a" style="left:724.6px;top:467.4px;width:575px;height:28px;border:3px solid #4a1ff0"></div>
<div class="a" style="left:0px;top:692px;width:720px;height:24px;background:#e6e6e6;border-bottom:1px solid #d0d0d0;border-top:1px solid #dadada"></div>
<div class="t" style="left:7.00px;top:695.00px;font-size:12.6px;letter-spacing:0.1px;">4 files and 18 directories. Total size: 17,507 bytes</div>
<div class="a" style="left:725px;top:692px;width:775px;height:24px;background:#e6e6e6;border-bottom:1px solid #d0d0d0;border-top:1px solid #dadada"></div>
<div class="t" style="left:732.00px;top:695.00px;font-size:12.6px;letter-spacing:0.1px;">20 files and 3 directories. Total size: 159,038 bytes</div>
<div class="a" style="left:0px;top:716px;width:1500px;height:5px;background:#e8e8e8;border-bottom:1px solid #d0d0d0"></div>
<div class="a" style="left:0px;top:721px;width:1500px;height:109px;background:#fff"></div>
<div class="a" style="left:0px;top:722px;width:1500px;height:18px;background:#f3f3f3;border-bottom:1px solid #dcdcdc"></div>
<div class="a" style="left:1px;top:725px;width:1.3px;height:12px;background:#d4d4d4"></div>
<div class="t" style="left:5.80px;top:726.00px;font-size:11.7px;letter-spacing:0.3px;">Server/Local file</div>
<div class="a" style="left:198.5px;top:725px;width:1.3px;height:12px;background:#d4d4d4"></div>
<div class="t" style="left:204.50px;top:726.00px;font-size:11.7px;letter-spacing:0.3px;">Direction</div>
<div class="a" style="left:263.5px;top:725px;width:1.3px;height:12px;background:#d4d4d4"></div>
<div class="t" style="left:268.00px;top:726.00px;font-size:11.7px;letter-spacing:0.3px;">Remote file</div>
<div class="a" style="left:460px;top:725px;width:1.3px;height:12px;background:#d4d4d4"></div>
<div class="t" style="left:243.00px;width:300px;text-align:right;top:726.00px;font-size:11.7px;letter-spacing:0.3px;margin-right:-0.3px;">Size</div>
<div class="a" style="left:547px;top:725px;width:1.3px;height:12px;background:#d4d4d4"></div>
<div class="t" style="left:552.00px;top:726.00px;font-size:11.7px;letter-spacing:0.3px;">Priority</div>
<div class="a" style="left:612.5px;top:725px;width:1.3px;height:12px;background:#d4d4d4"></div>
<div class="t" style="left:617.50px;top:726.00px;font-size:11.7px;letter-spacing:0.3px;">Status</div>
<div class="a" style="left:776.5px;top:725px;width:1.3px;height:12px;background:#d4d4d4"></div>
<div class="a" style="left:1498.3px;top:725px;width:1.3px;height:12px;background:#d4d4d4"></div>
</body></html>
